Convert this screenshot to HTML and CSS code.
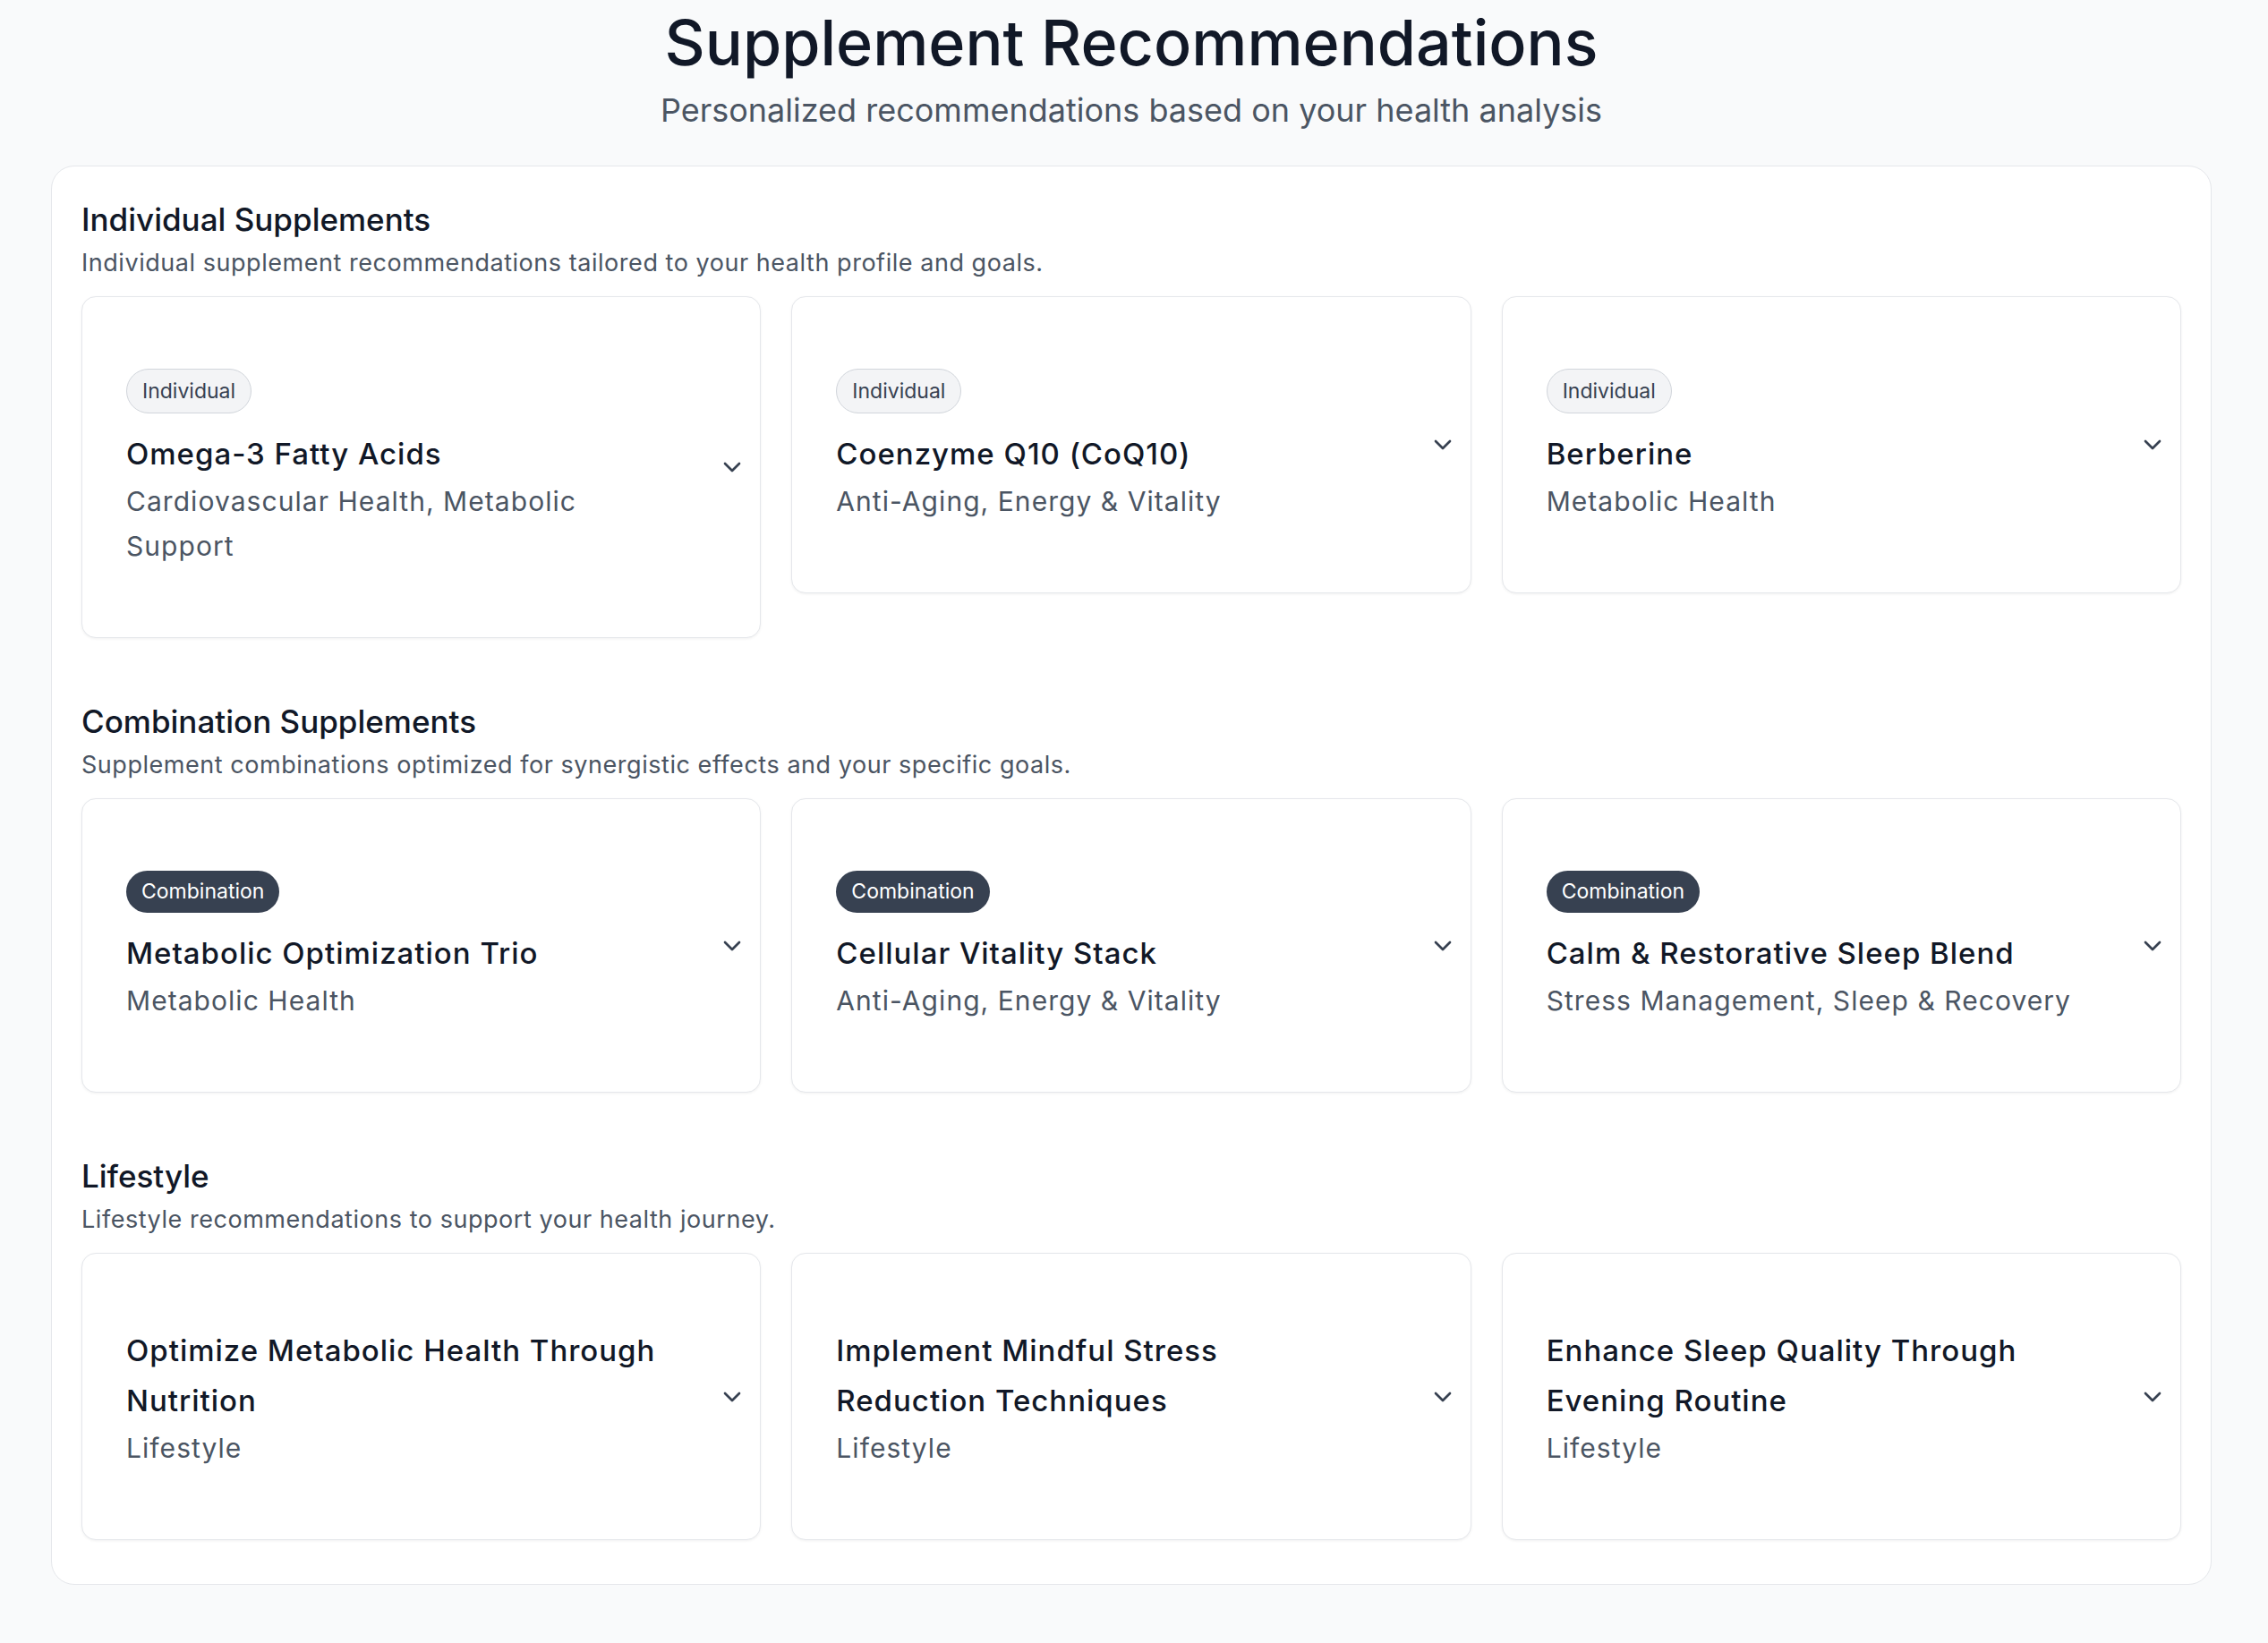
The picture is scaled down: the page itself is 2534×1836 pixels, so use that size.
FILE: index.html
```html
<!DOCTYPE html>
<html lang="en">
<head>
<meta charset="utf-8">
<title>Supplement Recommendations</title>
<link rel="stylesheet" href="styles.css">
</head>
<body>
<div class="page">
  <header class="hero">
    <h1 class="hero-title">Supplement Recommendations</h1>
    <p class="hero-sub">Personalized recommendations based on your health analysis</p>
  </header>

  <main class="panel">
    <section class="group">
      <h2 class="group-title">Individual Supplements</h2>
      <p class="group-desc">Individual supplement recommendations tailored to your health profile and goals.</p>
      <div class="grid">
        <article class="card">
          <div class="card-body">
            <span class="badge badge-light">Individual</span>
            <h3 class="card-title">Omega-3 Fatty Acids</h3>
            <p class="card-sub">Cardiovascular Health, Metabolic Support</p>
          </div>
          <svg class="chev" viewBox="0 0 24 24"><path d="m6 9 6 6 6-6"/></svg>
        </article>
        <article class="card">
          <div class="card-body">
            <span class="badge badge-light">Individual</span>
            <h3 class="card-title">Coenzyme Q10 (CoQ10)</h3>
            <p class="card-sub">Anti-Aging, Energy &amp; Vitality</p>
          </div>
          <svg class="chev" viewBox="0 0 24 24"><path d="m6 9 6 6 6-6"/></svg>
        </article>
        <article class="card">
          <div class="card-body">
            <span class="badge badge-light">Individual</span>
            <h3 class="card-title">Berberine</h3>
            <p class="card-sub">Metabolic Health</p>
          </div>
          <svg class="chev" viewBox="0 0 24 24"><path d="m6 9 6 6 6-6"/></svg>
        </article>
      </div>
    </section>

    <section class="group">
      <h2 class="group-title">Combination Supplements</h2>
      <p class="group-desc">Supplement combinations optimized for synergistic effects and your specific goals.</p>
      <div class="grid">
        <article class="card">
          <div class="card-body">
            <span class="badge badge-dark">Combination</span>
            <h3 class="card-title">Metabolic Optimization Trio</h3>
            <p class="card-sub">Metabolic Health</p>
          </div>
          <svg class="chev" viewBox="0 0 24 24"><path d="m6 9 6 6 6-6"/></svg>
        </article>
        <article class="card">
          <div class="card-body">
            <span class="badge badge-dark">Combination</span>
            <h3 class="card-title">Cellular Vitality Stack</h3>
            <p class="card-sub">Anti-Aging, Energy &amp; Vitality</p>
          </div>
          <svg class="chev" viewBox="0 0 24 24"><path d="m6 9 6 6 6-6"/></svg>
        </article>
        <article class="card">
          <div class="card-body">
            <span class="badge badge-dark">Combination</span>
            <h3 class="card-title">Calm &amp; Restorative Sleep Blend</h3>
            <p class="card-sub">Stress Management, Sleep &amp; Recovery</p>
          </div>
          <svg class="chev" viewBox="0 0 24 24"><path d="m6 9 6 6 6-6"/></svg>
        </article>
      </div>
    </section>

    <section class="group">
      <h2 class="group-title">Lifestyle</h2>
      <p class="group-desc">Lifestyle recommendations to support your health journey.</p>
      <div class="grid">
        <article class="card">
          <div class="card-body">
            <h3 class="card-title">Optimize Metabolic Health Through Nutrition</h3>
            <p class="card-sub">Lifestyle</p>
          </div>
          <svg class="chev" viewBox="0 0 24 24"><path d="m6 9 6 6 6-6"/></svg>
        </article>
        <article class="card">
          <div class="card-body">
            <h3 class="card-title">Implement Mindful Stress Reduction Techniques</h3>
            <p class="card-sub">Lifestyle</p>
          </div>
          <svg class="chev" viewBox="0 0 24 24"><path d="m6 9 6 6 6-6"/></svg>
        </article>
        <article class="card">
          <div class="card-body">
            <h3 class="card-title">Enhance Sleep Quality Through Evening Routine</h3>
            <p class="card-sub">Lifestyle</p>
          </div>
          <svg class="chev" viewBox="0 0 24 24"><path d="m6 9 6 6 6-6"/></svg>
        </article>
      </div>
    </section>
  </main>
</div>
</body>
</html>
```
FILE: styles.css
```css
* {
  box-sizing: border-box;
  margin: 0;
  padding: 0;
}

body {
  margin: 0;
  background: #f9fafb;
  font-family: Inter, "Noto Sans", "Liberation Sans", sans-serif;
  color: #111827;
}

.page {
  padding: 6px 63px 66px 57px;
}

.hero {
  text-align: center;
}

.hero-title {
  font-size: 70px;
  line-height: 84px;
  font-weight: 500;
  color: #111827;
}

.hero-sub {
  margin-top: 9px;
  font-size: 36px;
  line-height: 48px;
  color: #4b5563;
}

.panel {
  margin-top: 38px;
  background: #ffffff;
  border: 1px solid #e5e7eb;
  border-radius: 26px;
  padding: 37px 33px 49px;
}

.group + .group {
  margin-top: 71px;
}

.group-title {
  font-size: 35px;
  line-height: 44px;
  font-weight: 500;
  color: #111827;
}

.group-desc {
  margin-top: 9px;
  font-size: 27px;
  line-height: 36px;
  letter-spacing: 0.02em;
  color: #4b5563;
}

.grid {
  margin-top: 19px;
  display: grid;
  grid-template-columns: repeat(3, 1fr);
  gap: 34px;
  align-items: start;
}

.card {
  display: flex;
  align-items: center;
  background: #ffffff;
  border: 1px solid #e5e7eb;
  border-radius: 16px;
  box-shadow: 0 1px 3px rgba(0, 0, 0, 0.06);
  padding: 0 15px 0 49px;
}

.card-body {
  flex: 1;
  min-width: 0;
  display: flex;
  flex-direction: column;
  align-items: flex-start;
  padding: 80px 64px 77px 0;
}

.badge {
  display: inline-block;
  border-radius: 999px;
  font-size: 23px;
  white-space: nowrap;
}

.badge-light {
  height: 50px;
  line-height: 48px;
  padding: 0 17px;
  background: #f3f4f6;
  border: 1px solid #d1d5db;
  color: #374151;
}

.badge-dark {
  height: 47px;
  line-height: 47px;
  padding: 0 17px;
  background: #374151;
  color: #ffffff;
}

.badge + .card-title {
  margin-top: 17px;
}

.card-title {
  font-size: 33px;
  line-height: 56px;
  font-weight: 500;
  letter-spacing: 0.03em;
  color: #111827;
}

.card-sub {
  font-size: 30px;
  line-height: 50px;
  letter-spacing: 0.035em;
  color: #4b5563;
}

.chev {
  flex: none;
  width: 32px;
  height: 32px;
  fill: none;
  stroke: #374151;
  stroke-width: 2;
  stroke-linecap: round;
  stroke-linejoin: round;
}
```
